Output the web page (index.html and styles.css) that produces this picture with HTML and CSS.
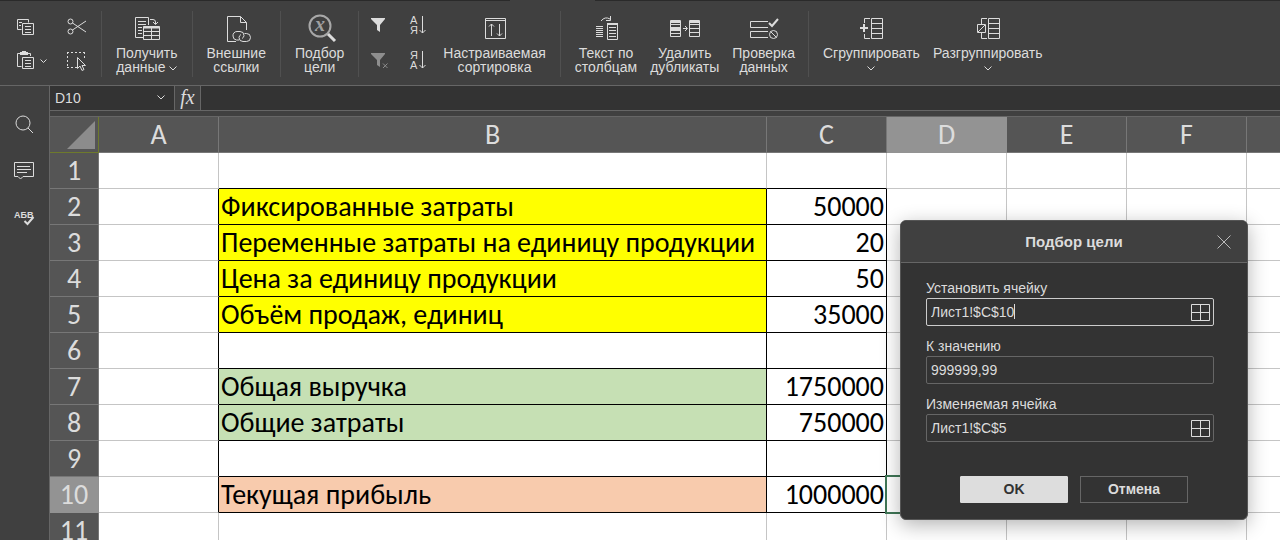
FILE: index.html
```html
<!DOCTYPE html>
<html lang="ru">
<head>
<meta charset="utf-8">
<title>Подбор цели</title>
<link rel="stylesheet" href="styles.css">
</head>
<body>
<div class="app">
  <header class="toolbar">
    <div class="group clip">
      <button class="icon-btn" aria-label="Копировать"><svg width="18" height="18" viewBox="0 0 18 18"><path d="M4.500 11.500H.5V1.500H11.500V4.500M2 4.500H5M2 7.500H4M5.500 5.500H16.500V16.500H5.500ZM8 8.500H14M8 11.500H14M8 14.500H14"/></svg></button>
      <button class="icon-btn" aria-label="Вырезать"><svg width="20" height="18" viewBox="0 0 20 18"><circle cx="3.500" cy="3.500" r="2.500"/><circle cx="3.500" cy="13.500" r="2.500"/><path d="M5.500 5 19 14M5.500 12 19 3"/></svg></button>
      <button class="icon-btn" aria-label="Вставить"><svg width="30" height="20" viewBox="0 0 30 20"><path d="M4.500 15.500H.5V2.500H3M11 2.500H13.500V5M5.500 6.500H16.500V17.500H5.500ZM8 9.500H14M8 12.500H14M8 15.500H14M23.500 8.500 26.500 11.500 29.500 8.500"/><path class="solid" d="M3 1H5V0H9V1H11V4H3Z"/></svg></button>
      <button class="icon-btn" aria-label="Выделить всё"><svg width="20" height="20" viewBox="0 0 20 20"><path stroke-dasharray="2 2" d="M0 1.500H18M.5 1V17M0 16.500H10M17.500 1V8"/><path class="cut" d="M10.500 6.500V17.500L13 15 15 19.500 17 18.500 15 14.500H18.500Z"/></svg></button>
    </div>
    <div class="group">
      <button class="big"><svg width="28" height="28" viewBox="0 0 28 28"><path d="M10 23.500H2.500V3.500H15.500V11M5 7.500H13M5 10.500H13M5 13.500H9M5 16.500H9M5 19.500H9M10.500 12.500H26.500V25.500H10.500ZM10.500 17.500H26.500M10.500 21.500H26.500M18.500 14V25M17 5.500H20Q22.500 5.500 22.500 8V10M20 8 22.500 10.500 25 8"/><path class="thick" d="M10.500 13.500H26.500"/></svg><span>Получить<br>данные <svg class="chev" width="8" height="5" viewBox="0 0 8 5"><path d="M.5 .5 4 4 7.500 .5"/></svg></span></button>
    </div>
    <div class="group">
      <button class="big"><svg width="28" height="28" viewBox="0 0 28 28"><path d="M14 27.500H5.500V2.500H18.500L24.500 8.500V16M18.500 2.500V8.500H24.500"/><path d="M17 26H14.500A4 4 0 0 1 11 22 4 4 0 0 1 15 17.500H18A4 4 0 0 1 22 21.500 3.500 3.500 0 0 1 20 24.500M22.500 19.500H24.500A4 4 0 0 1 28.500 23.500 4 4 0 0 1 24.500 27.500H21A4 4 0 0 1 17 23.500 4 4 0 0 1 19 20.500"/></svg><span>Внешние<br>ссылки</span></button>
    </div>
    <div class="group">
      <button class="big"><svg width="28" height="28" viewBox="0 0 28 28"><circle class="lens" cx="14" cy="12" r="10.500"/><path class="handle" d="M22 20 29 27"/><text class="var-x" x="14" y="17" text-anchor="middle">x</text></svg><span>Подбор<br>цели</span></button>
    </div>
    <div class="group">
      <div class="sorts">
        <button class="icon-btn" aria-label="Фильтр"><svg width="18" height="20" viewBox="0 0 18 20"><path class="solid" d="M0 3H14V4L9 10V17L6 15V10L0 4Z"/></svg></button>
        <button class="icon-btn" aria-label="Сортировка по возрастанию"><svg width="17" height="20" viewBox="0 0 17 20"><text class="letter" x="0" y="9">А</text><text class="letter" x="0" y="19">Я</text><path d="M12.500 1V18M9.500 15 12.500 18 15.500 15"/></svg></button>
        <button class="icon-btn dim" aria-label="Очистить фильтр"><svg width="18" height="20" viewBox="0 0 18 20"><path class="solid" d="M0 3H14V4L9 10V17L6 15V10L0 4Z"/><path d="M12 13.500 16.500 18M16.500 13.500 12 18"/></svg></button>
        <button class="icon-btn" aria-label="Сортировка по убыванию"><svg width="17" height="20" viewBox="0 0 17 20"><text class="letter" x="0" y="9">Я</text><text class="letter" x="0" y="19">А</text><path d="M12.500 1V18M9.500 15 12.500 18 15.500 15"/></svg></button>
      </div>
      <button class="big"><svg width="28" height="28" viewBox="0 0 28 28"><path d="M4.500 4.500H24.500V24.500H4.500ZM4.500 6.500H24.500M10.500 22V10M8 12.500 10.500 10 13 12.500M18.500 10V22M16 19.500 18.500 22 21 19.500"/></svg><span>Настраиваемая<br>сортировка</span></button>
    </div>
    <div class="group tight">
      <button class="big"><svg width="28" height="28" viewBox="0 0 28 28"><path d="M4 12.500H11M4 14.500H11M4 16.500H11M4 18.500H11M4 20.500H11M4 22.500H11M15.500 9.500H25.500V25.500H15.500ZM17 13.500H24M17 16.500H24M17 19.500H24M17 22.500H24M9 7Q13 2 18 5M18.500 2V6.500H14"/><path class="thick" d="M15 10H26"/></svg><span>Текст по<br>столбцам</span></button>
      <button class="big"><svg width="28" height="28" viewBox="0 0 28 28"><path d="M-.5 6.500H9.500V22.500H-.5ZM0 10.500H9M0 13.500H9M0 16.500H9M0 19.500H9M12 14.500H16M14 12 16.500 14.500 14 17M18.500 6.500H28.500V22.500H18.500ZM19 10.500H28M19 14.500H28M19 18.500H28"/><path class="thick" d="M0 8H9M0 15H9M19 8H28"/></svg><span>Удалить<br>дубликаты</span></button>
      <button class="big"><svg width="28" height="28" viewBox="0 0 28 28"><path d="M18 7.500H.5V13.500H18M18 17.500H.5V23.500H18"/><circle cx="23.500" cy="20.500" r="4"/><path d="M20.500 17.500 26.500 23.500"/><path class="thick" d="M19 9 22 12 28 5"/></svg><span>Проверка<br>данных</span></button>
    </div>
    <div class="group tight">
      <button class="big"><svg width="28" height="28" viewBox="0 0 28 28"><path d="M14.500 4.500H25.500V24.500H14.500ZM14.500 9.500H25.500M14.500 14.500H25.500M14.500 19.500H25.500M13 4.500H7.500V9M7.500 20V24.500H13"/><path class="thick" d="M3 14H11M7 10V18"/></svg><span>Сгруппировать<br><svg class="chev" width="8" height="5" viewBox="0 0 8 5"><path d="M.5 .5 4 4 7.500 .5"/></svg></span></button>
      <button class="big"><svg width="28" height="28" viewBox="0 0 28 28"><path d="M14.500 4.500H25.500V24.500H14.500ZM14.500 9.500H25.500M14.500 14.500H25.500M14.500 19.500H25.500M13 4.500H7.500V10M7.500 19V24.500H13M3.500 10.500H11.500V18.500H3.500ZM4 18 11 11"/></svg><span>Разгруппировать<br><svg class="chev" width="8" height="5" viewBox="0 0 8 5"><path d="M.5 .5 4 4 7.500 .5"/></svg></span></button>
    </div>
  </header>

  <div class="workspace">
    <nav class="side">
      <button class="icon-btn" aria-label="Поиск"><svg width="20" height="20" viewBox="0 0 20 20"><circle cx="9" cy="9" r="7"/><path d="M14 14 19 19"/></svg></button>
      <button class="icon-btn" aria-label="Комментарии"><svg width="20" height="20" viewBox="0 0 20 20"><path d="M.5 1.500H19.500V15.500H9L6.500 18 4 15.500H.5ZM3 5.500H16M3 8.500H17M3 11.500H13"/></svg></button>
      <button class="icon-btn" aria-label="Проверка орфографии"><svg width="20" height="20" viewBox="0 0 20 20"><text class="abc" x="0" y="10">АБВ</text><path class="thick" d="M10.500 13 13.500 16 19.500 9"/></svg></button>
    </nav>
    <main class="main">
      <div class="formula-bar">
        <div class="name-box">
          <input aria-label="Имя ячейки" value="D10">
          <button class="icon-btn" aria-label="Список имён"><svg width="8" height="5" viewBox="0 0 8 5"><path d="M.5 .5 4 4 7.500 .5"/></svg></button>
        </div>
        <button class="fx">fx</button>
        <input class="formula" aria-label="Формула">
      </div>
      <table class="sheet">
        <colgroup><col class="c-num"><col class="c-std"><col class="c-wide"><col class="c-std"><col class="c-std"><col class="c-std"><col class="c-std"><col></colgroup>
        <thead><tr><th class="corner"><svg width="28" height="28" viewBox="0 0 28 28"><path d="M28 0V28H0Z"/></svg></th><th>A</th><th>B</th><th>C</th><th class="active">D</th><th>E</th><th>F</th><th></th></tr></thead>
        <tbody>
          <tr class="before"><th>1</th><td></td><td></td><td></td><td></td><td></td><td></td><td></td></tr>
          <tr class="boxed"><th>2</th><td></td><td class="yellow">Фиксированные затраты</td><td>50000</td><td></td><td></td><td></td><td></td></tr>
          <tr class="boxed"><th>3</th><td></td><td class="yellow">Переменные затраты на единицу продукции</td><td>20</td><td></td><td></td><td></td><td></td></tr>
          <tr class="boxed"><th>4</th><td></td><td class="yellow">Цена за единицу продукции</td><td>50</td><td></td><td></td><td></td><td></td></tr>
          <tr class="boxed"><th>5</th><td></td><td class="yellow">Объём продаж, единиц</td><td>35000</td><td></td><td></td><td></td><td></td></tr>
          <tr class="boxed"><th>6</th><td></td><td></td><td></td><td></td><td></td><td></td><td></td></tr>
          <tr class="boxed"><th>7</th><td></td><td class="green">Общая выручка</td><td>1750000</td><td></td><td></td><td></td><td></td></tr>
          <tr class="boxed"><th>8</th><td></td><td class="green">Общие затраты</td><td>750000</td><td></td><td></td><td></td><td></td></tr>
          <tr class="boxed"><th>9</th><td></td><td></td><td></td><td></td><td></td><td></td><td></td></tr>
          <tr class="boxed"><th class="active">10</th><td></td><td class="peach">Текущая прибыль</td><td>1000000</td><td class="selected"></td><td></td><td></td><td></td></tr>
          <tr><th>11</th><td></td><td></td><td></td><td></td><td></td><td></td><td></td></tr>
        </tbody>
      </table>
    </main>
  </div>

  <form class="dialog" role="dialog" aria-labelledby="dlg-title">
    <div class="dialog-head">
      <h2 id="dlg-title">Подбор цели</h2>
      <button type="button" class="icon-btn close" aria-label="Закрыть"><svg width="14" height="14" viewBox="0 0 14 14"><path d="M.5 .5 13.500 13.500M13.500 .5 .5 13.500"/></svg></button>
    </div>
    <div class="dialog-body">
      <label for="f1">Установить ячейку</label>
      <div class="field focus"><span class="typed"><input id="f1" size="9" value="Лист1!$C$10"></span><button type="button" class="icon-btn" aria-label="Выбрать ячейку"><svg width="19" height="17" viewBox="0 0 19 17"><path d="M.5 .5H18.500V16.500H.5ZM9.500 .5V16.500M.5 8.500H18.500"/></svg></button></div>
      <label for="f2">К значению</label>
      <div class="field"><input id="f2" value="999999,99"></div>
      <label for="f3">Изменяемая ячейка</label>
      <div class="field"><input id="f3" value="Лист1!$C$5"><button type="button" class="icon-btn" aria-label="Выбрать ячейку"><svg width="19" height="17" viewBox="0 0 19 17"><path d="M.5 .5H18.500V16.500H.5ZM9.500 .5V16.500M.5 8.500H18.500"/></svg></button></div>
      <div class="actions"><button type="button" class="btn primary">OK</button><button type="button" class="btn">Отмена</button></div>
    </div>
  </form>
</div>
</body>
</html>
```
FILE: styles.css
```css
* { box-sizing: border-box; }
body { margin: 0; background: #404040; color: #dcdcdc; font: 14px/14px "Liberation Sans", Arial, sans-serif; }
button, input { font: inherit; color: inherit; background: none; border: 0; padding: 0; margin: 0; outline: 0; }
svg { display: block; overflow: visible; fill: none; stroke: #dcdcdc; }
svg .solid { fill: #dcdcdc; stroke: none; }
svg .thick { stroke-width: 2; }
svg text { fill: #dcdcdc; stroke: none; }
.app { position: relative; display: flex; flex-direction: column; height: 100vh; overflow: hidden; }

.toolbar { display: flex; height: 86px; padding: 11px 0 8px; border-bottom: 1px solid #666; background: linear-gradient(#2a2a2a, #2a2a2a) 0 0 / 510px 1px no-repeat, linear-gradient(#2a2a2a, #2a2a2a) 595px 0 / 100% 1px no-repeat, #404040; }
.group { display: flex; align-items: flex-start; padding: 0 7px; border-right: 1px solid #505050; }
.group:last-child { border-right: 0; }
.clip { display: grid; grid-template-columns: 50px 20px; grid-template-rows: 32px 36px; align-items: center; padding: 0 14px 0 17px; }
.icon-btn { display: flex; align-items: center; justify-content: flex-start; }
.big { display: flex; flex-direction: column; align-items: center; gap: 4px; padding: 3px 7px 0; text-align: center; white-space: nowrap; }
.tight .big { padding-right: 6px; }
.chev { display: inline-block; vertical-align: 1px; }
.sorts { display: grid; grid-template-columns: 39px 26px; grid-template-rows: 28px 42px; align-items: center; padding-left: 5px; }
.dim { opacity: .5; }
.lens { stroke: #a8a8a8; stroke-width: 2; }
.handle { stroke-width: 3; }
svg .var-x { font: italic bold 20px "Liberation Serif", serif; fill: #a0a0a0; }
.letter { font: 11px "Liberation Sans", sans-serif; }
.abc { font: bold 9px "Liberation Sans", sans-serif; }

.workspace { display: flex; flex: 1; min-height: 0; }
.side { display: flex; flex-direction: column; align-items: center; gap: 27px; width: 49px; padding: 28px 2px 0 0; }
.main { flex: 1; min-width: 0; border-left: 1px solid #666; }
.formula-bar { display: flex; height: 25px; border-bottom: 1px solid #666; background: #333; }
.name-box { display: flex; width: 125px; padding: 0 9px 1px 5px; border-right: 1px solid #666; }
.name-box input { flex: 1; min-width: 0; }
.fx { width: 26px; padding-bottom: 2px; border-right: 1px solid #666; background: #404040; font: italic 20px/22px "Liberation Serif", serif; }
.formula { flex: 1; }

.sheet { width: 100%; margin-top: 5px; border-top: 1px solid #666; border-spacing: 0; table-layout: fixed; background: #fff; color: #000; font: 28px/35px Carlito, Calibri, "Noto Sans", sans-serif; }
.c-num { width: 49px; }
.c-std { width: 120px; }
.c-wide { width: 548px; }
.sheet th, .sheet td { height: 36px; padding: 0 2px; border: solid #c5c5c5; border-width: 0 1px 1px 0; white-space: nowrap; }
.sheet th { padding: 0; background: #555; color: #dcdcdc; border-color: #777; font-weight: 400; }
.sheet th:last-child, .sheet td:last-child { border-right: 0; }
.sheet .corner { border-color: #6e7a2c; }
.corner svg { margin: 4px 3px 3px 17px; fill: #8c8c8c; stroke: none; }
.sheet th.active { background: #939393; border-color: #939393; }
.sheet td:nth-child(4) { text-align: right; }
.before td:nth-child(3), .before td:nth-child(4) { border-bottom-color: #000; }
.boxed td:nth-child(2) { border-right-color: #000; }
.boxed td:nth-child(3), .boxed td:nth-child(4) { border-color: #000; }
.yellow { background: #ff0; }
.green { background: #c6e0b4; }
.peach { background: #f8cbad; }
.selected { position: relative; }
.selected::after { content: ""; position: absolute; inset: -2px; border: 2px solid #3f7656; }

.dialog { position: absolute; top: 220px; right: 32px; width: 348px; border: 1px solid #555; border-radius: 6px; background: #333; box-shadow: 0 5px 20px rgba(0, 0, 0, .3); overflow: hidden; }
.dialog-head { display: flex; align-items: center; height: 42px; padding: 0 16px; border-bottom: 1px solid #666; background: #404040; }
.dialog-head h2 { flex: 1; margin: 0; padding-left: 14px; text-align: center; font: bold 15px/20px "Liberation Sans", sans-serif; }
.close { opacity: .8; }
.dialog-body { padding: 17px 33px 16px 25px; }
.dialog-body label { display: block; padding: 1px 0 2px; line-height: 15px; }
.field { display: flex; height: 28px; margin-bottom: 12px; padding: 0 3px 0 4px; border: 1px solid #666; border-radius: 2px; }
.field input { flex: 1; min-width: 0; padding-bottom: 1px; }
.focus { border-color: #ccc; }
.typed { display: flex; flex: 1; position: relative; }
.typed::after { content: ""; position: absolute; left: 83px; top: 5px; width: 1px; height: 15px; background: #dcdcdc; }
.actions { display: flex; justify-content: center; gap: 12px; padding: 22px 0 0 8px; }
.btn { width: 108px; height: 27px; padding-bottom: 2px; border: 1px solid #666; font-weight: 700; }
.primary { background: #ddd; border-color: #ddd; color: #333; border-radius: 1px; }
svg .cut { fill: #404040; }
```
